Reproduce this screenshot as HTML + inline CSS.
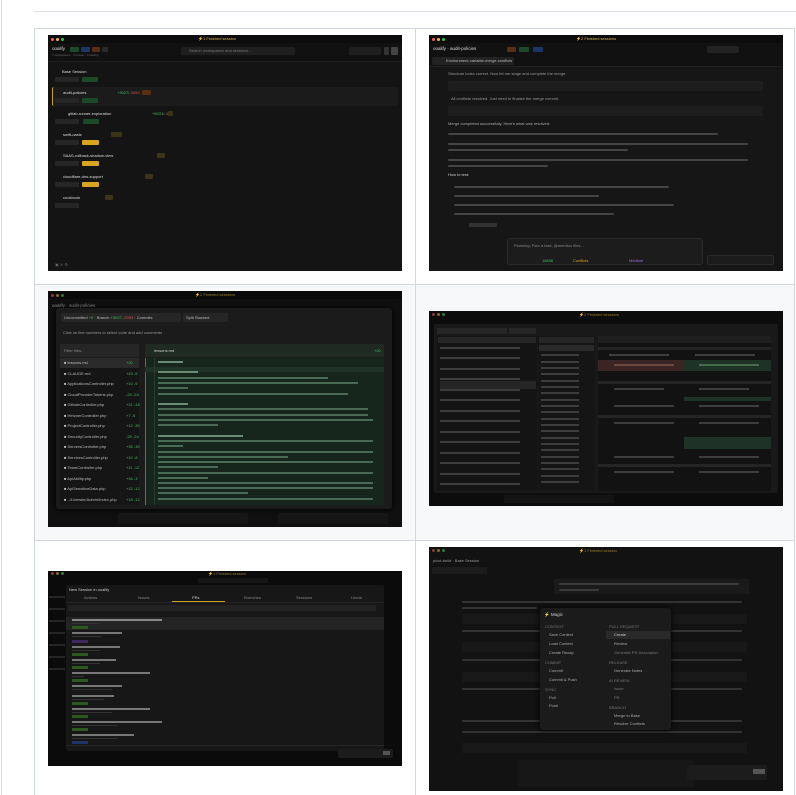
<!DOCTYPE html>
<html><head><meta charset="utf-8">
<style>
*{margin:0;padding:0;box-sizing:border-box}
body{width:796px;height:795px;background:#fff;position:relative;overflow:hidden;font-family:"Liberation Sans",sans-serif}
.a{position:absolute}
.shot{position:absolute;overflow:hidden;font-size:4px;color:#8a8a8a;line-height:1}
.b{position:absolute;height:2px;background:#555;border-radius:1px}
.t{position:absolute;white-space:nowrap;font-size:4px;color:#9a9a9a}
.dot{position:absolute;width:3px;height:3px;border-radius:50%;top:3px}
.tag{position:absolute;height:5px;border-radius:1px}
</style></head><body>
<div class="a" style="left:1px;top:0;width:1px;height:795px;background:#d8dee4"></div>
<div class="a" style="left:34px;top:11px;width:762px;height:1px;background:#d8dee4"></div>
<div class="a" style="left:34px;top:28px;width:761px;height:767px;border:1px solid #d0d7de;border-bottom:none"></div>
<div class="a" style="left:35px;top:284px;width:759px;height:256px;background:#f6f8fa"></div>
<div class="a" style="left:34px;top:284px;width:761px;height:1px;background:#d0d7de"></div>
<div class="a" style="left:34px;top:540px;width:761px;height:1px;background:#d0d7de"></div>
<div class="a" style="left:415px;top:28px;width:1px;height:767px;background:#d0d7de"></div>

<!-- SHOT 1 -->
<div class="shot" style="left:48px;top:35px;width:354px;height:236px;background:#141414">
 <div class="a" style="left:0;top:0;width:354px;height:8px;background:#0c0c0c"></div>
 <div class="dot" style="left:3px;background:#ff5f57"></div><div class="dot" style="left:8px;background:#febc2e"></div><div class="dot" style="left:13px;background:#28c840"></div>
 <div class="t" style="left:150px;top:2px;color:#e5b84a">⚡1 Finished session</div>
 <div class="a" style="left:0;top:8px;width:354px;height:19px;background:#111;border-bottom:1px solid #1e1e1e"></div>
 <div class="t" style="left:4px;top:12px;color:#ddd;font-size:4.5px">ooalify</div>
 <div class="tag" style="left:22px;top:12px;width:9px;background:#1d4a2a"></div><div class="tag" style="left:33px;top:12px;width:9px;background:#1d3466"></div><div class="tag" style="left:44px;top:12px;width:8px;background:#5a2e14"></div><div class="tag" style="left:54px;top:12px;width:6px;background:#2a2a2a"></div>
 <div class="t" style="left:4px;top:19px;color:#666;font-size:3px">7 workspaces · 3 review · 3 waiting</div>
 <div class="a" style="left:133px;top:12px;width:114px;height:8px;background:#1f1f1f;border-radius:2px"></div>
 <div class="t" style="left:141px;top:14px;color:#777">Search workspaces and sessions...</div>
 <div class="a" style="left:301px;top:12px;width:32px;height:8px;background:#1f1f1f;border-radius:2px"></div>
 <div class="a" style="left:336px;top:12px;width:5px;height:8px;background:#333;border-radius:1px"></div>
 <div class="a" style="left:343px;top:12px;width:7px;height:8px;background:#444;border-radius:1px"></div>
 <div class="a" style="left:4px;top:52px;width:346px;height:19px;background:#1b1b1b;border-left:1px solid #c9a227;border-radius:2px"></div>

 <div class="t" style="left:14px;top:35px;color:#ddd">Base Session</div><div class="tag" style="left:7px;top:42px;width:24px;background:#262626"></div><div class="tag" style="left:34px;top:42px;width:16px;background:#1b4a26"></div>
 <div class="t" style="left:15px;top:56px;color:#ddd">audit-policies</div><div class="t" style="left:69px;top:56px;color:#3fbf5a">+3027/<span style="color:#e05050">-2053</span></div><div class="tag" style="left:94px;top:55px;width:9px;background:#5a2e14"></div><div class="tag" style="left:7px;top:63px;width:24px;background:#262626"></div><div class="tag" style="left:34px;top:63px;width:16px;background:#1b4a26"></div>
 <div class="t" style="left:20px;top:77px;color:#ddd">gitlab-runner-exploration</div><div class="t" style="left:104px;top:77px;color:#3fbf5a">+5031/<span style="color:#e05050">-479</span></div><div class="tag" style="left:120px;top:76px;width:5px;background:#3b3416"></div><div class="tag" style="left:7px;top:84px;width:24px;background:#262626"></div><div class="tag" style="left:35px;top:84px;width:16px;background:#1b4a26"></div>
 <div class="t" style="left:15px;top:98px;color:#ddd">swift-oasis</div><div class="tag" style="left:63px;top:97px;width:11px;background:#3b3416"></div><div class="tag" style="left:7px;top:105px;width:24px;background:#262626"></div><div class="tag" style="left:34px;top:105px;width:17px;background:#d9a520"></div>
 <div class="t" style="left:15px;top:119px;color:#ddd">SAAS-rollback-shadow-view</div><div class="tag" style="left:109px;top:118px;width:8px;background:#3b3416"></div><div class="tag" style="left:7px;top:126px;width:24px;background:#262626"></div><div class="tag" style="left:34px;top:126px;width:17px;background:#d9a520"></div>
 <div class="t" style="left:15px;top:140px;color:#ddd">cloudflare-dns-support</div><div class="tag" style="left:97px;top:139px;width:8px;background:#3b3416"></div><div class="tag" style="left:7px;top:147px;width:24px;background:#262626"></div><div class="tag" style="left:34px;top:147px;width:17px;background:#d9a520"></div>
 <div class="t" style="left:15px;top:161px;color:#ddd">cookbook</div><div class="tag" style="left:57px;top:160px;width:8px;background:#3b3416"></div><div class="tag" style="left:7px;top:168px;width:24px;background:#262626"></div>
 <div class="t" style="left:7px;top:228px;color:#666">▣ ✕ ⚙</div>
</div>

<!-- SHOT 2 -->
<div class="shot" style="left:429px;top:35px;width:354px;height:236px;background:#161616">
 <div class="a" style="left:0;top:0;width:354px;height:8px;background:#0c0c0c"></div>
 <div class="dot" style="left:3px;background:#ff5f57"></div><div class="dot" style="left:8px;background:#febc2e"></div><div class="dot" style="left:13px;background:#28c840"></div>
 <div class="t" style="left:147px;top:2px;color:#e5b84a">⚡2 Finished sessions</div>
 <div class="a" style="left:0;top:8px;width:354px;height:24px;background:#111;border-bottom:1px solid #222"></div>
 <div class="t" style="left:4px;top:12px;color:#ddd;font-size:4.5px">ooalify · audit-policies</div>
 <div class="tag" style="left:78px;top:12px;width:9px;background:#5a2e14"></div><div class="tag" style="left:90px;top:12px;width:10px;background:#1d4a2a"></div><div class="tag" style="left:104px;top:12px;width:10px;background:#1d3466"></div>
 <div class="a" style="left:278px;top:11px;width:32px;height:7px;background:#222;border-radius:2px"></div>
 <div class="a" style="left:3px;top:22px;width:82px;height:8px;background:#222;border-radius:2px"></div>
 <div class="t" style="left:17px;top:24px;color:#bbb">Environment-variable-merge-conflicts</div>
 <div class="t" style="left:19px;top:37px">Structure looks correct. Now let me stage and complete the merge.</div>
 <div class="a" style="left:19px;top:46px;width:315px;height:10px;background:#1e1e1e;border-radius:2px"></div>
 <div class="t" style="left:22px;top:62px">All conflicts resolved. Just need to finalize the merge commit.</div>
 <div class="a" style="left:19px;top:71px;width:315px;height:10px;background:#1e1e1e;border-radius:2px"></div>
 <div class="t" style="left:19px;top:87px;color:#aaa">Merge completed successfully. Here's what was resolved:</div>
 <div class="b" style="left:19px;top:98px;width:270px;background:#444"></div>
 <div class="b" style="left:19px;top:108px;width:300px;background:#444"></div><div class="b" style="left:19px;top:114px;width:180px;background:#444"></div>
 <div class="b" style="left:19px;top:124px;width:300px;background:#444"></div><div class="b" style="left:19px;top:130px;width:100px;background:#444"></div>
 <div class="t" style="left:19px;top:138px;color:#ccc">How to test:</div>
 <div class="b" style="left:25px;top:151px;width:215px;background:#444"></div>
 <div class="b" style="left:25px;top:160px;width:145px;background:#444"></div>
 <div class="b" style="left:25px;top:169px;width:220px;background:#444"></div>
 <div class="b" style="left:25px;top:178px;width:160px;background:#444"></div>
 <div class="b" style="left:40px;top:188px;width:28px;background:#333;height:4px"></div>
 <div class="a" style="left:78px;top:203px;width:196px;height:27px;background:#1c1c1c;border:1px solid #2a2a2a;border-radius:3px"></div>
 <div class="t" style="left:85px;top:209px;color:#888">Planning: Plan a task, @mention files...</div>
 <div class="t" style="left:113px;top:224px;color:#3fbf5a">18838</div><div class="t" style="left:144px;top:224px;color:#d9a520">Conflicts</div><div class="t" style="left:200px;top:224px;color:#a070e0">Medium</div>
 <div class="a" style="left:278px;top:220px;width:67px;height:10px;background:#1c1c1c;border:1px solid #2a2a2a;border-radius:2px"></div>
</div>

<!-- SHOT 3 -->
<div class="shot" style="left:48px;top:291px;width:354px;height:236px;background:#0f0f0f">
 <div class="a" style="left:0;top:0;width:354px;height:8px;background:#0a0a0a"></div>
 <div class="dot" style="left:3px;background:#8a3a37"></div><div class="dot" style="left:8px;background:#8a6a20"></div><div class="dot" style="left:13px;background:#2a7a3a"></div>
 <div class="t" style="left:147px;top:2px;color:#9a7a30">⚡2 Finished sessions</div>
 <div class="t" style="left:4px;top:13px;color:#999;font-size:4.5px">ooalify · audit-policies</div>
 <div class="a" style="left:8px;top:17px;width:336px;height:201px;background:#1b1b1b;border-radius:3px;box-shadow:0 0 4px #000"></div>
 <div class="a" style="left:13px;top:22px;width:120px;height:9px;background:#262626;border-radius:2px"></div>
 <div class="a" style="left:135px;top:22px;width:45px;height:9px;background:#262626;border-radius:2px"></div>
 <div class="t" style="left:16px;top:25px;color:#bbb">Uncommitted <span style="color:#3fbf5a">+0</span> · Branch <span style="color:#3fbf5a">+3027</span> <span style="color:#e05050">-2053</span> · Commits</div>
 <div class="t" style="left:138px;top:25px;color:#bbb">Split Stacked</div>
 <div class="t" style="left:15px;top:40px;color:#999">Click on line numbers to select code and add comments</div>
 <div class="a" style="left:12px;top:53px;width:79px;height:13px;background:#262626"></div>
 <div class="a" style="left:12px;top:67px;width:79px;height:147px;background:#151515"></div>
 <div class="a" style="left:12px;top:67px;width:79px;height:10px;background:#2a2a2a"></div>
 <div class="t" style="left:16px;top:58px;color:#888">Filter files...</div>
 <div class="a" style="left:97px;top:53px;width:239px;height:13px;background:#1f2a22"></div>
 <div class="t" style="left:106px;top:58px;color:#ccc">lessons.md</div><div class="t" style="left:326px;top:58px;color:#3fbf5a">+20</div>
 <div class="a" style="left:97px;top:67px;width:239px;height:147px;background:#17261d;border-left:1px solid #2f8a4a"></div>
 <div class="a" style="left:97px;top:76px;width:239px;height:5px;background:#1f3326"></div>
 <div class="a" style="left:106px;top:67px;width:1px;height:147px;background:#2a3a30"></div>
</div>
<style>.fl{position:absolute;left:16px;font-size:4px;color:#bbb;white-space:nowrap}.fl i{color:#3fbf5a;font-style:normal;position:absolute;left:62px}.cl{position:absolute;left:110px;height:2px;background:#4a6a55}</style>
<div class="shot" style="left:48px;top:291px;width:354px;height:236px">
 <div class="fl" style="top:70px">■ lessons.md<i>+20</i></div>
 <div class="fl" style="top:81px">■ CLAUDE.md<i>+43 -5</i></div>
 <div class="fl" style="top:91px">■ ApplicationsController.php<i>+10 -9</i></div>
 <div class="fl" style="top:102px">■ CloudProviderTokens.php<i>-29 -24</i></div>
 <div class="fl" style="top:112px">■ GithubController.php<i>+21 -18</i></div>
 <div class="fl" style="top:123px">■ HetznerController.php<i>+7 -5</i></div>
 <div class="fl" style="top:133px">■ ProjectController.php<i>+12 -30</i></div>
 <div class="fl" style="top:144px">■ SecurityController.php<i>-29 -24</i></div>
 <div class="fl" style="top:154px">■ ServersController.php<i>+35 -30</i></div>
 <div class="fl" style="top:165px">■ ServicesController.php<i>+10 -8</i></div>
 <div class="fl" style="top:175px">■ TeamController.php<i>+11 -12</i></div>
 <div class="fl" style="top:186px">■ ApiAbility.php<i>+34 -3</i></div>
 <div class="fl" style="top:196px">■ ApiSensitiveData.php<i>+12 -12</i></div>
 <div class="fl" style="top:207px">■ ../Livewire/Admin/Index.php<i>+18 -12</i></div>
 <div class="cl" style="top:70px;width:25px;background:#6a8a75"></div>
 <div class="cl" style="top:80px;width:40px;background:#6a8a75"></div>
 <div class="cl" style="top:86px;width:170px"></div><div class="cl" style="top:91px;width:200px"></div><div class="cl" style="top:96px;width:30px"></div><div class="cl" style="top:102px;width:190px"></div>
 <div class="cl" style="top:112px;width:30px;background:#6a8a75"></div>
 <div class="cl" style="top:117px;width:210px"></div><div class="cl" style="top:123px;width:210px"></div><div class="cl" style="top:128px;width:215px"></div><div class="cl" style="top:133px;width:60px"></div>
 <div class="cl" style="top:144px;width:85px;background:#6a8a75"></div>
 <div class="cl" style="top:149px;width:215px"></div><div class="cl" style="top:154px;width:25px"></div><div class="cl" style="top:160px;width:215px"></div><div class="cl" style="top:165px;width:130px"></div><div class="cl" style="top:170px;width:215px"></div><div class="cl" style="top:175px;width:60px"></div><div class="cl" style="top:181px;width:215px"></div><div class="cl" style="top:186px;width:50px"></div><div class="cl" style="top:191px;width:215px"></div><div class="cl" style="top:196px;width:215px"></div><div class="cl" style="top:201px;width:90px"></div><div class="cl" style="top:207px;width:215px"></div>
 <div class="a" style="left:70px;top:222px;width:130px;height:11px;background:#161616;border-radius:2px"></div>
 <div class="a" style="left:230px;top:222px;width:110px;height:11px;background:#161616;border-radius:2px"></div>
</div>

<!-- SHOT 4 -->
<div class="shot" style="left:429px;top:311px;width:354px;height:195px;background:#0c0c0c">
 <div class="dot" style="left:3px;top:2px;background:#8a3a37"></div><div class="dot" style="left:8px;top:2px;background:#8a6a20"></div><div class="dot" style="left:13px;top:2px;background:#2a7a3a"></div>
 <div class="t" style="left:150px;top:2px;color:#9a7a30">⚡2 Finished sessions</div>
 <div class="a" style="left:5px;top:13px;width:344px;height:169px;background:#191919;border-radius:2px"></div>
 <div class="a" style="left:8px;top:17px;width:70px;height:6px;background:#262626"></div><div class="a" style="left:80px;top:17px;width:27px;height:6px;background:#262626"></div>
 <div class="a" style="left:8px;top:25px;width:100px;height:155px;background:#141414"></div>
 <div class="a" style="left:9px;top:26px;width:98px;height:6px;background:#262626"></div>
 <div class="a" style="left:109px;top:25px;width:57px;height:155px;background:#151515"></div>
 <div class="a" style="left:110px;top:26px;width:55px;height:6px;background:#262626"></div>
 <div class="a" style="left:110px;top:34px;width:55px;height:6px;background:#2a2a2a"></div>
 <div class="a" style="left:169px;top:25px;width:173px;height:155px;background:#121212"></div>
 <div class="a" style="left:169px;top:25px;width:173px;height:7px;background:#1f1f1f"></div>
 <div class="a" style="left:169px;top:49px;width:86px;height:11px;background:#3a2424"></div>
 <div class="a" style="left:255px;top:49px;width:87px;height:11px;background:#1e3326"></div>
 <div class="a" style="left:255px;top:86px;width:87px;height:4px;background:#1e3326"></div>
 <div class="a" style="left:255px;top:126px;width:87px;height:12px;background:#1e3326"></div>
 <div class="a" style="left:169px;top:36px;width:173px;height:3px;background:#252525"></div>
 <div class="a" style="left:169px;top:70px;width:173px;height:3px;background:#252525"></div>
 <div class="a" style="left:169px;top:104px;width:173px;height:3px;background:#252525"></div>
 <div class="a" style="left:169px;top:153px;width:173px;height:3px;background:#252525"></div>
 <div class="a" style="left:11px;top:70px;width:96px;height:8px;background:#262626"></div>
</div>
<style>.r4{position:absolute;height:2px;background:#3d3d3d}</style>
<div class="shot" style="left:429px;top:311px;width:354px;height:195px">
 <div class="r4" style="left:11px;top:36px;width:80px"></div><div class="r4" style="left:11px;top:46px;width:80px"></div><div class="r4" style="left:11px;top:57px;width:80px"></div><div class="r4" style="left:11px;top:67px;width:80px"></div><div class="r4" style="left:11px;top:78px;width:80px"></div><div class="r4" style="left:11px;top:88px;width:80px"></div><div class="r4" style="left:11px;top:99px;width:80px"></div><div class="r4" style="left:11px;top:109px;width:80px"></div><div class="r4" style="left:11px;top:120px;width:80px"></div><div class="r4" style="left:11px;top:130px;width:80px"></div><div class="r4" style="left:11px;top:141px;width:80px"></div><div class="r4" style="left:11px;top:151px;width:80px"></div><div class="r4" style="left:11px;top:162px;width:80px"></div><div class="r4" style="left:11px;top:172px;width:80px"></div>
 <div class="r4" style="left:112px;top:43px;width:38px"></div><div class="r4" style="left:112px;top:50px;width:38px"></div><div class="r4" style="left:112px;top:56px;width:38px"></div><div class="r4" style="left:112px;top:62px;width:38px"></div><div class="r4" style="left:112px;top:69px;width:38px"></div><div class="r4" style="left:112px;top:75px;width:38px"></div><div class="r4" style="left:112px;top:81px;width:38px"></div><div class="r4" style="left:112px;top:88px;width:38px"></div><div class="r4" style="left:112px;top:94px;width:38px"></div><div class="r4" style="left:112px;top:100px;width:38px"></div><div class="r4" style="left:112px;top:107px;width:38px"></div><div class="r4" style="left:112px;top:113px;width:38px"></div><div class="r4" style="left:112px;top:119px;width:38px"></div><div class="r4" style="left:112px;top:126px;width:38px"></div><div class="r4" style="left:112px;top:132px;width:38px"></div><div class="r4" style="left:112px;top:138px;width:38px"></div><div class="r4" style="left:112px;top:145px;width:38px"></div><div class="r4" style="left:112px;top:151px;width:38px"></div><div class="r4" style="left:112px;top:157px;width:38px"></div><div class="r4" style="left:112px;top:164px;width:38px"></div><div class="r4" style="left:112px;top:170px;width:38px"></div>
 <div class="r4" style="left:180px;top:43px;width:60px"></div><div class="r4" style="left:266px;top:43px;width:60px"></div>
 <div class="r4" style="left:185px;top:53px;width:60px;background:#6a4a40"></div><div class="r4" style="left:270px;top:53px;width:60px;background:#4a6a50"></div>
 <div class="r4" style="left:185px;top:77px;width:50px"></div><div class="r4" style="left:270px;top:77px;width:50px"></div>
 <div class="r4" style="left:185px;top:94px;width:60px"></div><div class="r4" style="left:270px;top:94px;width:60px"></div>
 <div class="r4" style="left:185px;top:111px;width:60px"></div><div class="r4" style="left:270px;top:111px;width:60px"></div>
 <div class="r4" style="left:185px;top:145px;width:60px"></div><div class="r4" style="left:270px;top:145px;width:60px"></div>
 <div class="r4" style="left:185px;top:160px;width:60px"></div><div class="r4" style="left:270px;top:160px;width:60px"></div>
 <div class="a" style="left:75px;top:184px;width:110px;height:8px;background:#141414"></div>
</div>

<!-- SHOT 5 -->
<div class="shot" style="left:48px;top:571px;width:354px;height:195px;background:#0b0b0b">
 <div class="dot" style="left:3px;top:1px;background:#8a3a37"></div><div class="dot" style="left:8px;top:1px;background:#8a6a20"></div><div class="dot" style="left:13px;top:1px;background:#2a7a3a"></div>
 <div class="t" style="left:160px;top:1px;color:#9a7a30">⚡1 Finished session</div>
 <div class="a" style="left:150px;top:7px;width:70px;height:5px;background:#161616"></div>
 <div class="a" style="left:18px;top:14px;width:318px;height:166px;background:#171717;border-radius:2px"></div>
 <div class="t" style="left:21px;top:17px;color:#ccc">New Session in ooalify</div>
 <div class="t" style="left:36px;top:25px;color:#888">Actions</div><div class="t" style="left:90px;top:25px;color:#888">Issues</div><div class="t" style="left:144px;top:25px;color:#ccc">PRs</div><div class="t" style="left:196px;top:25px;color:#888">Branches</div><div class="t" style="left:248px;top:25px;color:#888">Sessions</div><div class="t" style="left:303px;top:25px;color:#888">Linear</div>
 <div class="a" style="left:124px;top:30px;width:53px;height:1px;background:#c9a227"></div>
 <div class="a" style="left:18px;top:31px;width:318px;height:1px;background:#262626"></div>
 <div class="a" style="left:20px;top:34px;width:308px;height:6px;background:#222"></div>
 <div class="a" style="left:18px;top:46px;width:318px;height:13px;background:#242424"></div>
 <div class="a" style="left:18px;top:174px;width:318px;height:1px;background:#262626"></div>
 <div class="a" style="left:290px;top:178px;width:55px;height:9px;background:#1c1c1c;border-radius:2px"></div>
 <div class="a" style="left:335px;top:180px;width:7px;height:4px;background:#555"></div>
</div>
<style>.p5{position:absolute;left:24px;height:2px;background:#555}.p5b{position:absolute;left:24px;height:1px;background:#333}.g5{position:absolute;left:24px;width:16px;height:3px;background:#2a5a20}</style>
<div class="shot" style="left:48px;top:571px;width:354px;height:195px">
 <div class="p5" style="top:48px;width:90px;background:#888"></div><div class="p5b" style="top:52px;width:28px"></div><div class="g5" style="top:55px"></div>
 <div class="p5" style="top:61px;width:50px;background:#777"></div><div class="p5b" style="top:65px;width:30px"></div><div class="g5" style="top:69px;background:#3a2a60"></div>
 <div class="p5" style="top:75px;width:48px;background:#777"></div><div class="p5b" style="top:79px;width:28px"></div><div class="g5" style="top:82px"></div>
 <div class="p5" style="top:88px;width:44px;background:#777"></div><div class="p5b" style="top:92px;width:28px"></div><div class="g5" style="top:95px"></div>
 <div class="p5" style="top:101px;width:78px;background:#777"></div><div class="p5b" style="top:105px;width:12px"></div><div class="g5" style="top:108px"></div>
 <div class="p5" style="top:114px;width:50px;background:#777"></div><div class="p5b" style="top:118px;width:40px"></div>
 <div class="p5" style="top:124px;width:42px;background:#777"></div><div class="p5b" style="top:128px;width:32px"></div><div class="g5" style="top:131px"></div>
 <div class="p5" style="top:137px;width:78px;background:#777"></div><div class="p5b" style="top:141px;width:40px"></div><div class="g5" style="top:144px"></div>
 <div class="p5" style="top:150px;width:90px;background:#777"></div><div class="p5b" style="top:154px;width:45px"></div><div class="g5" style="top:157px"></div>
 <div class="p5" style="top:163px;width:62px;background:#777"></div><div class="p5b" style="top:167px;width:45px"></div><div class="g5" style="top:170px;background:#1d3466"></div>
 <div class="a" style="left:1px;top:20px;width:16px;height:85px;background:repeating-linear-gradient(#0b0b0b 0 5px,#262626 5px 7px,#0b0b0b 7px 12px)"></div>
</div>

<!-- SHOT 6 -->
<div class="shot" style="left:429px;top:547px;width:354px;height:244px;background:#121212">
 <div class="dot" style="left:3px;top:2px;background:#8a3a37"></div><div class="dot" style="left:8px;top:2px;background:#8a6a20"></div><div class="dot" style="left:13px;top:2px;background:#2a7a3a"></div>
 <div class="t" style="left:150px;top:2px;color:#9a7a30">⚡1 Finished session</div>
 <div class="t" style="left:4px;top:12px;color:#999;font-size:4px">pivot-build · Base Session</div>
 <div class="a" style="left:3px;top:20px;width:55px;height:7px;background:#1c1c1c"></div>
 <div class="a" style="left:125px;top:32px;width:195px;height:15px;background:#1a1a1a"></div>
 <div class="b" style="left:130px;top:36px;width:180px;background:#3a3a3a"></div><div class="b" style="left:130px;top:42px;width:40px;background:#3a3a3a"></div>
 <div class="b" style="left:33px;top:54px;width:280px;background:#333"></div><div class="b" style="left:33px;top:60px;width:75px;background:#333"></div>
 <div class="a" style="left:33px;top:67px;width:285px;height:10px;background:#181818"></div>
 <div class="b" style="left:33px;top:83px;width:280px;background:#333"></div>
 <div class="a" style="left:33px;top:95px;width:285px;height:10px;background:#181818"></div>
 <div class="b" style="left:33px;top:112px;width:280px;background:#333"></div>
 <div class="a" style="left:33px;top:125px;width:285px;height:10px;background:#181818"></div>
 <div class="b" style="left:33px;top:141px;width:280px;background:#333"></div>
 <div class="b" style="left:33px;top:173px;width:280px;background:#333"></div>
 <div class="b" style="left:33px;top:184px;width:280px;background:#333"></div>
 <div class="a" style="left:33px;top:196px;width:285px;height:10px;background:#181818"></div>
 <div class="a" style="left:88px;top:213px;width:178px;height:27px;background:#171717;border-radius:3px"></div>
 <div class="a" style="left:258px;top:218px;width:80px;height:15px;background:#1c1c1c;border-radius:2px"></div>
 <div class="a" style="left:324px;top:222px;width:12px;height:5px;background:#555"></div>
 <div class="a" style="left:111px;top:61px;width:131px;height:122px;background:#1b1b1b;border-radius:3px;box-shadow:0 0 6px #000"></div>
 <div class="t" style="left:115px;top:66px;color:#ccc;font-size:4.5px">⚡ Magic</div>
 <div class="t" style="left:116px;top:78px;color:#777">CONTEXT</div><div class="t" style="left:180px;top:78px;color:#777">PULL REQUEST</div>
 <div class="a" style="left:177px;top:84px;width:64px;height:8px;background:#2a2a2a"></div>
 <div class="t" style="left:120px;top:86px;color:#aaa">Save Context</div><div class="t" style="left:185px;top:86px;color:#ccc">Create</div>
 <div class="t" style="left:120px;top:95px;color:#aaa">Load Context</div><div class="t" style="left:185px;top:95px;color:#aaa">Review</div>
 <div class="t" style="left:120px;top:104px;color:#aaa">Create Recap</div><div class="t" style="left:185px;top:104px;color:#777">Generate PR Description</div>
 <div class="t" style="left:116px;top:114px;color:#777">COMMIT</div><div class="t" style="left:180px;top:114px;color:#777">RELEASE</div>
 <div class="t" style="left:120px;top:122px;color:#aaa">Commit</div><div class="t" style="left:185px;top:122px;color:#aaa">Generate Notes</div>
 <div class="t" style="left:120px;top:131px;color:#aaa">Commit &amp; Push</div><div class="t" style="left:180px;top:132px;color:#777">AI REVIEW</div>
 <div class="t" style="left:116px;top:141px;color:#777">SYNC</div><div class="t" style="left:185px;top:140px;color:#777">Issue</div>
 <div class="t" style="left:120px;top:149px;color:#aaa">Pull</div><div class="t" style="left:185px;top:149px;color:#777">PR</div>
 <div class="t" style="left:120px;top:157px;color:#aaa">Push</div><div class="t" style="left:180px;top:159px;color:#777">BRANCH</div>
 <div class="t" style="left:185px;top:167px;color:#aaa">Merge to Base</div><div class="t" style="left:185px;top:175px;color:#aaa">Resolve Conflicts</div>
</div>
</body></html>
